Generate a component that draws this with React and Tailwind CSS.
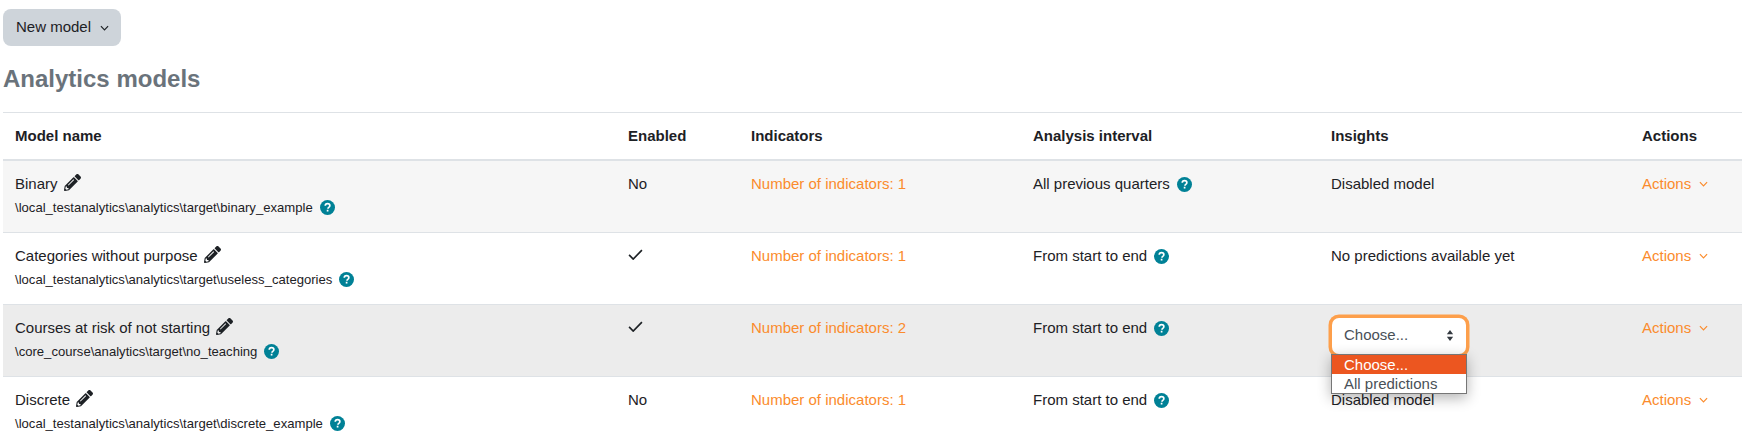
import React from "react";
import { FaPencilAlt } from "react-icons/fa";

const Chevron = ({ className }) => (
  <svg viewBox="0 0 10 6" className={className} fill="none" stroke="currentColor" strokeWidth="1.3">
    <path d="M1 1l4 4 4-4" />
  </svg>
);
const Check = () => (
  <svg viewBox="0 0 16 12" className="w-[15px] h-[11px] text-[#1d2125]" fill="none" stroke="currentColor" strokeWidth="1.8">
    <path d="M1 6.5l4.5 4.5L15 1.2" />
  </svg>
);
const Help = () => (
  <svg viewBox="0 0 16 16" className="inline-block w-[15px] h-[15px] align-[-3px] ml-[7px] text-[#008196]">
    <circle cx="8" cy="8" r="8" fill="currentColor" />
    <path d="M5.6 6.2c0-1.5 1.1-2.3 2.5-2.3s2.4.8 2.4 2.1c0 1-.6 1.5-1.2 1.9-.5.3-.7.5-.7 1v.3" fill="none" stroke="white" strokeWidth="1.8" />
    <rect x="7.2" y="10.4" width="1.8" height="1.9" fill="white" />
  </svg>
);

const rows = [
  { name: "Binary", path: "\\local_testanalytics\\analytics\\target\\binary_example", enabled: "No", n: 1, interval: "All previous quarters", insights: "Disabled model", bg: "bg-[#f6f6f6] h-[73px]" },
  { name: "Categories without purpose", path: "\\local_testanalytics\\analytics\\target\\useless_categories", enabled: true, n: 1, interval: "From start to end", insights: "No predictions available yet", bg: "bg-white h-[72px]" },
  { name: "Courses at risk of not starting", path: "\\core_course\\analytics\\target\\no_teaching", enabled: true, n: 2, interval: "From start to end", select: true, bg: "bg-[#ececec] h-[72px]" },
  { name: "Discrete", path: "\\local_testanalytics\\analytics\\target\\discrete_example", enabled: "No", n: 1, interval: "From start to end", insights: "Disabled model", bg: "bg-white h-[72px]" },
];

const Select = () => (
  <div className="relative w-[134px] ml-[1px] mt-[1px]">
    <div className="h-[36px] rounded-[7px] bg-white ring-[3.5px] ring-[#fd9f4b] flex items-center justify-between pl-[12px] pr-[12px] pb-[1px] text-[#495057]">
      <span>Choose...</span>
      <svg viewBox="0 0 8 14" className="w-[8px] h-[11px] text-[#343a40]" fill="currentColor">
        <path d="M4 0l4 5.5H0zM4 14l4-5.5H0z" />
      </svg>
    </div>
    <div className="absolute z-10 left-[-1px] top-[36px] w-[136px] border border-[#767676] bg-white text-[#495057] shadow-[0_4px_14px_rgba(0,0,0,0.3)] leading-[19px]">
      <div className="bg-[#ec5620] text-white pl-[12px]">Choose...</div>
      <div className="pl-[12px]">All predictions</div>
    </div>
  </div>
);

export default function App() {
  return (
    <div className="h-[431px] overflow-hidden bg-white text-[15px] leading-[22.5px] text-[#1d2125] font-['Liberation_Sans',Arial,sans-serif]">
      <div className="pl-[3px] pt-[9px]">
        <button className="h-[37px] w-[118px] rounded-[8px] bg-[#ced4da] flex items-center justify-center gap-[9px] pl-[1px] text-[#1d2125]">
          New model <Chevron className="w-[9px] h-[6px]" />
        </button>
        <h3 className="mt-[19px] text-[24px] leading-[28px] font-bold text-[#6a737b]">Analytics models</h3>
        <table className="mt-[19px] w-[1739px] table-fixed border-collapse">
          <colgroup>
            <col className="w-[613px]" />
            <col className="w-[123px]" />
            <col className="w-[282px]" />
            <col className="w-[298px]" />
            <col className="w-[311px]" />
            <col className="w-[112px]" />
          </colgroup>
          <thead>
            <tr className="h-[47px] border-t border-[#dee2e6] border-b-2 border-b-[#dee2e6] text-left">
              {["Model name", "Enabled", "Indicators", "Analysis interval", "Insights", "Actions"].map((h) => (
                <th key={h} className="px-[12px] font-bold">{h}</th>
              ))}
            </tr>
          </thead>
          <tbody>
            {rows.map((r) => (
              <tr key={r.name} className={`${r.bg} border-b border-[#dee2e6] align-top`}>
                <td className="px-[12px] pt-[12px]">
                  <div>
                    {r.name}
                    <FaPencilAlt className="inline-block text-[17px] text-[#1d2125] ml-[6px] align-[-2px]" />
                  </div>
                  <div className="text-[13.1px] mt-[1.5px]">
                    {r.path}
                    <Help />
                  </div>
                </td>
                <td className="px-[12px] pt-[12px]">
                  {r.enabled === true ? <span className="inline-block h-[22px] pt-[4px]"><Check /></span> : r.enabled}
                </td>
                <td className="px-[12px] pt-[12px] text-[#fb8b2c]">Number of indicators: {r.n}</td>
                <td className="px-[12px] pt-[12px]">
                  {r.interval}
                  <Help />
                </td>
                <td className="px-[12px] pt-[12px]">{r.select ? <Select /> : r.insights}</td>
                <td className="px-[12px] pt-[12px] text-[#fb8b2c]">
                  <span className="inline-flex items-center gap-[8px]">Actions <Chevron className="w-[9px] h-[6px]" /></span>
                </td>
              </tr>
            ))}
          </tbody>
        </table>
      </div>
    </div>
  );
}
